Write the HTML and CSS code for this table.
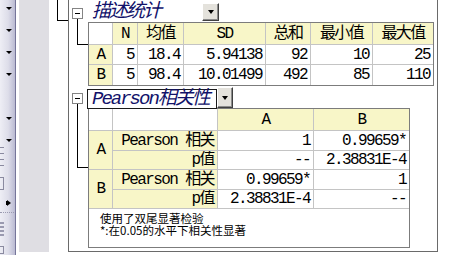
FILE: index.html
```html
<!DOCTYPE html>
<html lang="zh-CN">
<head>
<meta charset="utf-8">
<title>描述统计</title>
<link rel="stylesheet" href="styles.css">
</head>
<body>
<div class="toolbar">
  <span class="tri"></span>
  <span class="tri"></span>
  <span class="tri"></span>
  <span class="tri"></span>
  <span class="tri gap"></span>
  <span class="tri"></span>
  <span class="lines"></span>
  <span class="edge"></span>
  <span class="play"></span>
  <span class="dots"></span>
  <span class="grip"></span>
  <span class="edge edge2"></span>
</div>
<div class="gutter"></div>
<main class="main">
  <div class="tree-out"></div>
  <div class="report">
    <section class="sec sec1">
      <div class="branch">
        <span class="collapse"></span>
        <span class="connector c1"></span>
      </div>
      <div class="content">
        <div class="title-row">
          <span class="title">描述统计</span>
          <span class="dd"></span>
        </div>
        <table class="grid g1">
          <colgroup>
            <col class="w24"><col class="w25"><col class="w46"><col class="w82"><col class="w45"><col class="w62"><col class="w60">
          </colgroup>
          <tr class="h22">
            <td class="blank"></td><td class="hd">N</td><td class="hd">均值</td><td class="hd">SD</td><td class="hd">总和</td><td class="hd">最小值</td><td class="hd last">最大值</td>
          </tr>
          <tr class="h20">
            <td class="hd">A</td><td class="num">5</td><td class="num">18.4</td><td class="num">5.94138</td><td class="num">92</td><td class="num">10</td><td class="num last">25</td>
          </tr>
          <tr class="h20 lastrow">
            <td class="hd">B</td><td class="num">5</td><td class="num">98.4</td><td class="num">10.01499</td><td class="num">492</td><td class="num">85</td><td class="num last">110</td>
          </tr>
        </table>
      </div>
    </section>
    <section class="sec sec2">
      <div class="branch">
        <span class="collapse c2"></span>
        <span class="connector cn2"></span>
      </div>
      <div class="content">
        <div class="title-row tr2">
          <span class="title box">Pearson相关性</span>
          <span class="dd dd2"></span>
        </div>
        <table class="grid g2">
          <colgroup>
            <col class="w24"><col class="w105"><col class="w96"><col class="w95">
          </colgroup>
          <tr class="h22">
            <td class="blank"></td><td class="blank"></td><td class="hd">A</td><td class="hd last">B</td>
          </tr>
          <tr class="h20">
            <td class="hd" rowspan="2">A</td><td class="lbl">Pearson 相关</td><td class="num">1</td><td class="num last">0.99659*</td>
          </tr>
          <tr class="h19">
            <td class="lbl">p值</td><td class="num">--</td><td class="num last">2.38831E-4</td>
          </tr>
          <tr class="h20">
            <td class="hd" rowspan="2">B</td><td class="lbl">Pearson 相关</td><td class="num">0.99659*</td><td class="num last">1</td>
          </tr>
          <tr class="h19">
            <td class="lbl">p值</td><td class="num">2.38831E-4</td><td class="num last">--</td>
          </tr>
          <tr class="h38 lastrow">
            <td class="foot last" colspan="4"><div class="fl">使用了双尾显著检验</div><div class="fl">*:在0.05的水平下相关性显著</div></td>
          </tr>
        </table>
      </div>
    </section>
  </div>
</main>
</body>
</html>
```

FILE: styles.css
```css
* { box-sizing: border-box; }

html, body {
  margin: 0;
  padding: 0;
  background: #ffffff;
}

body {
  display: flex;
  align-items: flex-start;
  height: 255px;
  overflow: hidden;
  font-family: "Liberation Mono", "Noto Sans CJK SC", monospace;
  color: #000;
}

/* left toolbar strip */
.toolbar {
  width: 16px;
  height: 255px;
  flex-shrink: 0;
  display: flex;
  flex-direction: column;
  padding-top: 7px;
  background: linear-gradient(to right, #eeeef5 0%, #dddde9 55%, #babad2 100%);
  border-right: 1px solid #76769a;
}

.tri {
  width: 0;
  height: 0;
  margin-left: 6px;
  border-left: 3px solid transparent;
  border-right: 3px solid transparent;
  border-top: 3px solid #000;
}
.tri + .tri { margin-top: 19px; }
.tri.gap { margin-top: 41px; }

.lines {
  width: 4px;
  height: 20px;
  margin-top: 5px;
  background: repeating-linear-gradient(to bottom, #8a8aa0 0 1px, transparent 1px 6px);
}
.edge {
  width: 4px;
  height: 13px;
  margin-top: 10px;
  border: 1px solid #8a8aa0;
  border-left: none;
}
.play {
  width: 6px;
  height: 0;
  margin-top: 10px;
  margin-left: 7px;
  border-top: 3px solid transparent;
  border-bottom: 3px solid transparent;
  border-left: 4px solid #000;
  box-shadow: -2px 0 0 -1px #000;
}
.dots {
  width: 14px;
  height: 0;
  margin-top: 6px;
  border-top: 1px dotted #9a9ab0;
}
.grip {
  width: 4px;
  height: 15px;
  margin-top: 9px;
  background: repeating-linear-gradient(to bottom, #9a9ab0 0 2px, transparent 2px 4px);
}
.edge2 { margin-top: 9px; height: 8px; }

.gutter {
  width: 30px;
  height: 252px;
  margin-left: 3px;
  flex-shrink: 0;
  background: #dfdee3;
}

.main {
  display: flex;
  align-items: flex-start;
  margin-left: 8px;
}

.tree-out {
  width: 11px;
  height: 21px;
  border-left: 1px solid #000;
  border-bottom: 1px solid #000;
}

.report {
  width: 370px;
  height: 252px;
  border: 1px solid #6a6a6a;
  border-top: none;
}

.sec { display: flex; }

.branch {
  width: 19px;
  flex-shrink: 0;
  display: flex;
  flex-direction: column;
  padding-left: 3px;
}

.collapse {
  width: 11px;
  height: 11px;
  margin-top: 8px;
  border: 1px solid #848484;
  background: #fff;
  display: flex;
  align-items: center;
  justify-content: center;
}
.collapse::before {
  content: "";
  width: 5px;
  height: 1px;
  background: #000;
}
.collapse.c2 { margin-top: 7px; }

.connector {
  width: 11px;
  margin-left: 5px;
  border-left: 1px solid #000;
  border-bottom: 1px solid #000;
}
.connector.c1 { height: 26px; }
.connector.cn2 { height: 64px; }

.title-row {
  display: flex;
  align-items: flex-start;
  height: 22px;
}
.title {
  width: 114px;
  padding-left: 4px;
  padding-top: 2px;
  font-style: italic;
  font-size: 19px;
  letter-spacing: -2px;
  line-height: 20px;
  color: #12126a;
  white-space: nowrap;
}

.dd {
  width: 17px;
  height: 18px;
  margin-top: 3px;
  background: #e4e2dc;
  border: 1px solid;
  border-color: #ffffff #404040 #404040 #ffffff;
  box-shadow: inset -1px -1px 0 #8c8c8c;
  display: flex;
  align-items: center;
  justify-content: center;
}
.dd::before {
  content: "";
  width: 0;
  height: 0;
  border-left: 3.5px solid transparent;
  border-right: 3.5px solid transparent;
  border-top: 4px solid #000;
}

.title-row.tr2 {
  height: 23px;
  margin-left: -1px;
  align-items: flex-end;
}
.title.box {
  width: 130px;
  height: 20px;
  padding-left: 4px;
  padding-top: 0;
  line-height: 18px;
  border: 1px solid #1a1a1a;
  background: #fff;
}
.dd.dd2 {
  height: 21px;
  width: 16px;
  margin-top: 0;
  margin-bottom: 1px;
}

/* tables */
.grid {
  border-collapse: separate;
  border-spacing: 0;
  table-layout: fixed;
  border: 1px solid #7c7c7c;
  font-size: 16px;
  letter-spacing: -1.6px;
}
.grid.g1 { width: 346px; }
.grid.g2 { width: 322px; margin-top: -1px; }

.grid td {
  padding: 0 3px 0 3px;
  border-right: 1px solid #c4c4c4;
  border-bottom: 1px solid #c4c4c4;
  white-space: nowrap;
  overflow: hidden;
  vertical-align: middle;
  line-height: 18px;
  background: #fff;
}
.grid td.last { border-right: none; }
.grid tr.lastrow td { border-bottom: none; }

.w24 { width: 24px; }
.w25 { width: 25px; }
.w46 { width: 46px; }
.w82 { width: 82px; }
.w45 { width: 45px; }
.w62 { width: 62px; }
.w60 { width: 60px; }
.w105 { width: 105px; }
.w96 { width: 96px; }
.w95 { width: 95px; }

.h22 { height: 22px; }
.h20 { height: 20px; }
.h19 { height: 19px; }
.h38 { height: 38px; }

.grid td.hd {
  background: #f8f6c8;
  text-align: center;
}
.grid td.lbl {
  background: #f8f6c8;
  text-align: right;
}
.grid td.num { text-align: right; }

.grid td.foot {
  vertical-align: top;
  text-align: left;
  padding: 3px 0 0 11px;
  font-family: "Noto Sans CJK SC", "Liberation Sans", sans-serif;
  font-size: 11.5px;
  letter-spacing: 0;
  line-height: 12px;
}
.fl { height: 12px; line-height: 12px; }
```
